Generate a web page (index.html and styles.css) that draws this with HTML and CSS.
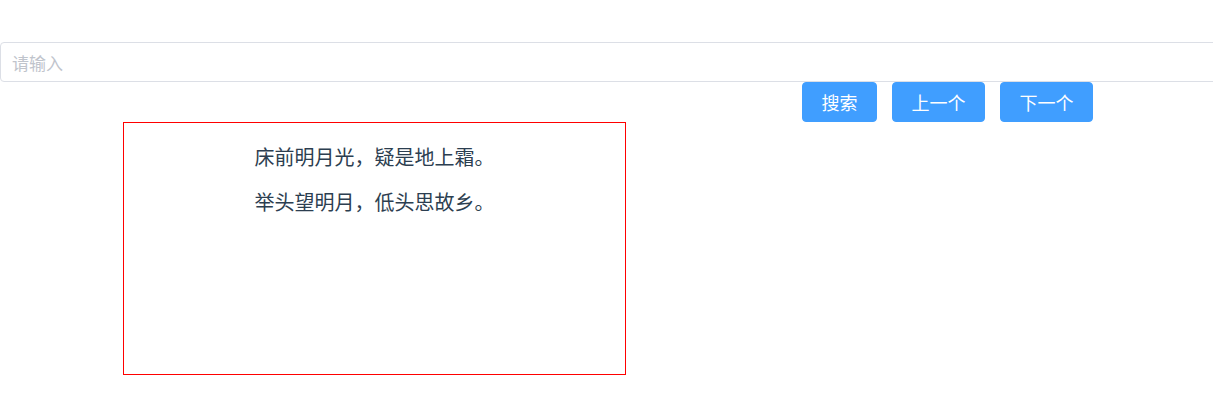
FILE: index.html
```html
<!DOCTYPE html>
<html lang="zh">
<head>
<meta charset="utf-8">
<title>搜索</title>
<link rel="stylesheet" href="styles.css">
</head>
<body>
<div class="page">
  <div class="search-row">
    <input class="search-input" type="text" placeholder="请输入">
  </div>
  <div class="actions">
    <button class="btn">搜索</button>
    <button class="btn">上一个</button>
    <button class="btn">下一个</button>
  </div>
  <div class="poem">
    <p class="line">床前明月光，疑是地上霜。</p>
    <p class="line">举头望明月，低头思故乡。</p>
  </div>
</div>
</body>
</html>
```
FILE: styles.css
```css
html, body {
  margin: 0;
  padding: 0;
  background: #fff;
  overflow: hidden;
}
body {
  font-family: "Noto Sans CJK SC", "Noto Sans", sans-serif;
}
.page {
  padding-top: 42px;
}
.search-row {
  width: calc(100% + 12px);
}
.search-input {
  display: block;
  box-sizing: border-box;
  width: 100%;
  height: 40px;
  margin: 0;
  padding: 0 11px;
  border: 1px solid #dcdfe6;
  border-radius: 4px;
  font-family: "Noto Sans CJK SC", sans-serif;
  font-size: 17px;
  color: #606266;
  outline: none;
}
.search-input::placeholder {
  color: #c0c4cc;
}
.actions {
  display: flex;
  justify-content: flex-end;
  gap: 15px;
  padding-right: 120px;
}
.btn {
  box-sizing: border-box;
  height: 40px;
  padding: 0 18.5px;
  border: 1px solid #409eff;
  border-radius: 4px;
  background: #409eff;
  color: #fff;
  font-family: "Noto Sans CJK SC", sans-serif;
  font-size: 18px;
  line-height: 1;
  cursor: pointer;
}
.btn-last {
  padding: 0 18px;
}
.poem {
  box-sizing: border-box;
  width: 503px;
  height: 253px;
  margin-left: 123px;
  border: 1px solid #ff0000;
  text-align: center;
  color: #2c3e50;
  font-size: 20px;
  padding-top: 1px;
}
.line {
  margin: 20px 0;
  line-height: 25px;
}
.line + .line {
  margin-top: 19px;
}
```
